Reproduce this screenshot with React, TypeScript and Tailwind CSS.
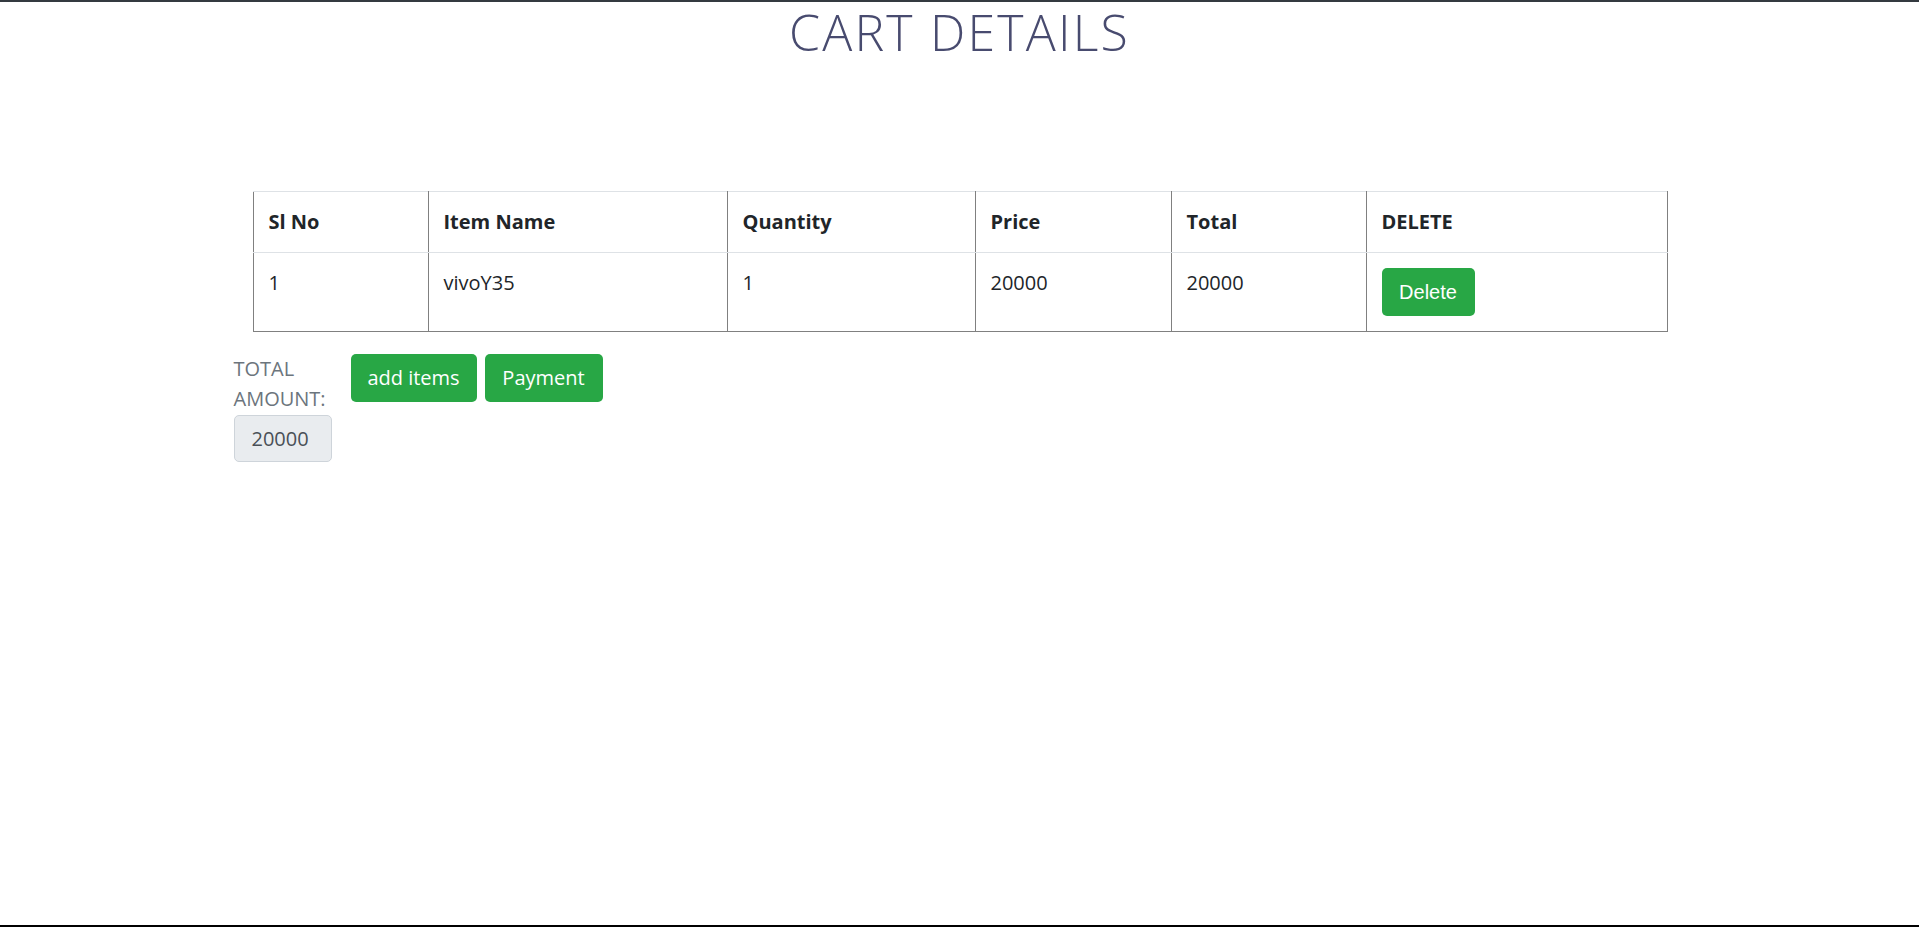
const font = { fontFamily: '"Open Sans", "Liberation Sans", sans-serif' };

const headers = ['Sl No', 'Item Name', 'Quantity', 'Price', 'Total', 'DELETE'];
const widths = ['w-[175px]', 'w-[299px]', 'w-[248px]', 'w-[196px]', 'w-[195px]', 'w-[301px]'];

export default function App() {
  const items = [{ id: 1, name: 'vivoY35', qty: 1, price: 20000 }];
  const total = items.reduce((s, i) => s + i.qty * i.price, 0);

  return (
    <div
      className="flex h-[927px] flex-col border-t-2 border-b-2 border-t-[#343a40] border-b-black bg-white text-[#212529]"
      style={font}
    >
      <h1 className="text-center text-[50px] font-light leading-[60px] tracking-[2.2px] text-[#484b6f]">CART DETAILS</h1>

      <div className="mx-auto mt-[129px] w-[1452px]">
        <table className="ml-[19px] w-[1414px] table-fixed border-collapse text-left text-[20px] leading-[30px]">
          <colgroup>
            {widths.map((w, i) => (
              <col key={i} className={w} />
            ))}
          </colgroup>
          <thead>
            <tr>
              {headers.map((h) => (
                <th
                  key={h}
                  className="border border-x-[#808080] border-y-[#dee2e6] px-[15px] py-[15px] align-top font-bold"
                >
                  {h}
                </th>
              ))}
            </tr>
          </thead>
          <tbody>
            {items.map((it) => (
              <tr key={it.id}>
                <td className="border border-x-[#808080] border-t-[#dee2e6] border-b-[#808080] px-[15px] py-[15px] align-top">{it.id}</td>
                <td className="border border-x-[#808080] border-t-[#dee2e6] border-b-[#808080] px-[15px] py-[15px] align-top">{it.name}</td>
                <td className="border border-x-[#808080] border-t-[#dee2e6] border-b-[#808080] px-[15px] py-[15px] align-top">{it.qty}</td>
                <td className="border border-x-[#808080] border-t-[#dee2e6] border-b-[#808080] px-[15px] py-[15px] align-top">{it.price}</td>
                <td className="border border-x-[#808080] border-t-[#dee2e6] border-b-[#808080] px-[15px] py-[15px] align-top">{it.qty * it.price}</td>
                <td className="border border-x-[#808080] border-t-[#dee2e6] border-b-[#808080] px-[15px] py-[15px] align-top">
                  <button
                    className="flex h-[48px] w-[93px] items-center justify-center rounded-[5px] bg-[#28a745] text-[20px] text-white"
                    style={{ fontFamily: '"Liberation Sans", Arial, sans-serif' }}
                  >
                    Delete
                  </button>
                </td>
              </tr>
            ))}
          </tbody>
        </table>

        <div className="mt-[22px] flex items-start">
          <div className="w-[98px]">
            <div className="text-[20px] leading-[30px] text-[#6c757d]">TOTAL AMOUNT:</div>
            <div className="mt-px flex h-[47px] w-[98px] items-center rounded-[5px] border border-[#ced4da] bg-[#e9ecef] pl-[17px] text-[20px] text-[#495057]">
              {total}
            </div>
          </div>
          <div className="ml-[19px] flex gap-[8px]">
            <button className="flex h-[48px] w-[126px] items-center justify-center rounded-[5px] bg-[#28a745] text-[20px] text-white">
              add items
            </button>
            <button className="flex h-[48px] w-[118px] items-center justify-center rounded-[5px] bg-[#28a745] text-[20px] text-white">
              Payment
            </button>
          </div>
        </div>
      </div>
    </div>
  );
}
